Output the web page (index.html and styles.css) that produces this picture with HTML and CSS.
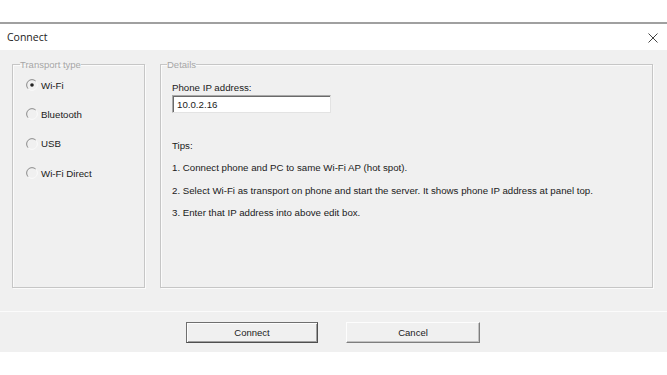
FILE: index.html
```html
<!DOCTYPE html>
<html>
<head>
<meta charset="utf-8">
<link rel="stylesheet" href="styles.css">
</head>
<body>
<div class="screen">
  <div class="topgap"></div>
  <div class="titlebar">
    <span class="title">Connect</span>
    <svg class="close" width="10" height="10" viewBox="0 0 10 10"><path d="M0.5 0.5L9.5 9.5M9.5 0.5L0.5 9.5" stroke="#444" stroke-width="1"/></svg>
  </div>
  <div class="content">
    <fieldset class="group transport">
      <legend>Transport type</legend>
      <div class="radios">
        <label class="radio"><svg width="12" height="12" viewBox="0 0 12 12"><path d="M2.2 9.8A5.2 5.2 0 0 1 9.8 2.2" fill="none" stroke="#8a8a8a" stroke-width="1"/><path d="M9.8 2.2A5.2 5.2 0 0 1 2.2 9.8" fill="none" stroke="#fafafa" stroke-width="1"/><circle cx="6" cy="6" r="1.8" fill="#222"/></svg><span>Wi-Fi</span></label>
        <label class="radio"><svg width="12" height="12" viewBox="0 0 12 12"><path d="M2.2 9.8A5.2 5.2 0 0 1 9.8 2.2" fill="none" stroke="#8a8a8a" stroke-width="1"/><path d="M9.8 2.2A5.2 5.2 0 0 1 2.2 9.8" fill="none" stroke="#fafafa" stroke-width="1"/></svg><span>Bluetooth</span></label>
        <label class="radio"><svg width="12" height="12" viewBox="0 0 12 12"><path d="M2.2 9.8A5.2 5.2 0 0 1 9.8 2.2" fill="none" stroke="#8a8a8a" stroke-width="1"/><path d="M9.8 2.2A5.2 5.2 0 0 1 2.2 9.8" fill="none" stroke="#fafafa" stroke-width="1"/></svg><span>USB</span></label>
        <label class="radio"><svg width="12" height="12" viewBox="0 0 12 12"><path d="M2.2 9.8A5.2 5.2 0 0 1 9.8 2.2" fill="none" stroke="#8a8a8a" stroke-width="1"/><path d="M9.8 2.2A5.2 5.2 0 0 1 2.2 9.8" fill="none" stroke="#fafafa" stroke-width="1"/></svg><span>Wi-Fi Direct</span></label>
      </div>
    </fieldset>
    <fieldset class="group details">
      <legend>Details</legend>
      <div class="field-label">Phone IP address:</div>
      <div class="ipbox">10.0.2.16</div>
      <div class="tips">
        <p>Tips:</p>
        <p>1. Connect phone and PC to same Wi-Fi AP (hot spot).</p>
        <p>2. Select Wi-Fi as transport on phone and start the server. It shows phone IP address at panel top.</p>
        <p>3. Enter that IP address into above edit box.</p>
      </div>
    </fieldset>
  </div>
  <div class="buttonbar">
    <div class="btn default">Connect</div>
    <div class="btn cancel">Cancel</div>
  </div>
</div>
</body>
</html>
```
FILE: styles.css
```css
html, body {
  margin: 0;
  padding: 0;
  background: #ffffff;
}
.screen {
  width: 667px;
  height: 375px;
  font-family: "Liberation Sans", Arial, sans-serif;
  font-size: 9.7px;
  color: #1a1a1a;
}
.topgap {
  height: 22px;
  border-bottom: 2px solid #a0a0a0;
}
.titlebar {
  height: 26px;
  display: flex;
  align-items: center;
  justify-content: space-between;
  padding: 0 9px 0 7px;
  background: #ffffff;
}
.title {
  font-family: "Open Sans", sans-serif;
  font-size: 10.5px;
  color: #222;
}
.close {
  margin-top: 1px;
}
.content {
  background: #f0f0f0;
  height: 252px;
  padding: 9px 0 0 12px;
  display: flex;
  gap: 15px;
}
.group {
  margin: 0;
  padding: 0;
  border: 1px solid #c6c6c6;
  box-shadow: inset 1px 1px 0 #fbfbfb, 1px 1px 0 #fbfbfb;
  height: 229px;
  box-sizing: border-box;
  min-width: 0;
}
.group legend {
  color: #a6a6a6;
  padding: 0;
  margin-left: 7px;
  font-size: 9.5px;
  line-height: 11px;
}
.transport {
  width: 133px;
}
.details {
  width: 493px;
}
.details legend {
  margin-left: 6px;
}
.radios {
  display: flex;
  flex-direction: column;
  gap: 17.4px;
  padding: 9px 0 0 13px;
}
.radio {
  display: flex;
  align-items: center;
  gap: 3px;
  height: 12px;
}
.radio svg {
  flex: none;
}
.field-label {
  margin: 11.5px 0 0 11px;
  line-height: 11px;
}
.ipbox {
  margin: 2.5px 0 0 11px;
  width: 159px;
  height: 18px;
  box-sizing: border-box;
  background: #ffffff;
  border: 1px solid #a9a9a9;
  border-right-color: #e3e3e3;
  border-bottom-color: #e3e3e3;
  box-shadow: inset 1px 1px 0 #6a6a6a;
  padding: 3px 0 0 4px;
  line-height: 11px;
}
.tips {
  margin: 26.5px 0 0 11px;
}
.tips p {
  margin: 0 0 11.6px 0;
  line-height: 11px;
}
.buttonbar {
  background: #f0f0f0;
  border-top: 1px solid #fbfbfb;
  height: 40px;
  display: flex;
  align-items: center;
  gap: 28px;
  padding-left: 186px;
}
.btn {
  height: 21px;
  box-sizing: border-box;
  display: flex;
  align-items: center;
  justify-content: center;
  background: #f0f0f0;
  font-size: 9.5px;
}
.btn.default {
  width: 132px;
  border: 1px solid #6f6f6f;
  border-right-color: #4f4f4f;
  border-bottom-color: #4f4f4f;
  box-shadow: inset 1px 1px 0 #fdfdfd, inset -1px -1px 0 #a0a0a0;
}
.btn.cancel {
  width: 134px;
  border: 1px solid #fdfdfd;
  border-right-color: #7e7e7e;
  border-bottom-color: #7e7e7e;
  box-shadow: inset -1px -1px 0 #c2c2c2;
}
```
